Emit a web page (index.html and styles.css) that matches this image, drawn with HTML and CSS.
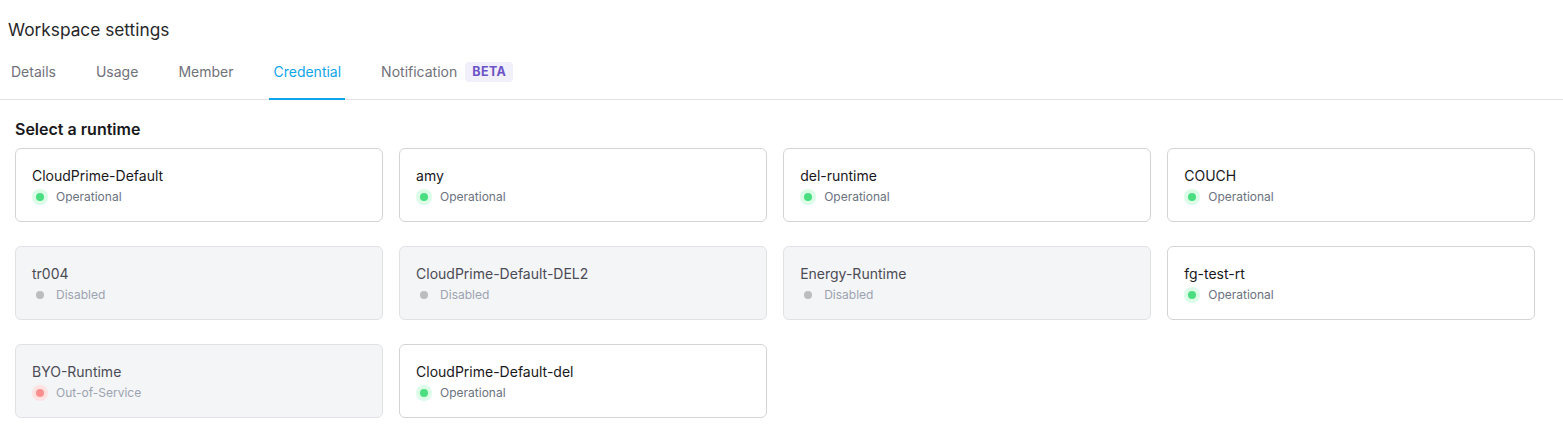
FILE: index.html
```html
<!DOCTYPE html>
<html lang="en">
<head>
<meta charset="utf-8">
<title>Workspace settings</title>
<link rel="stylesheet" href="styles.css">
</head>
<body>
  <header class="page-header">
    <h1 class="page-title">Workspace settings</h1>
    <nav class="tabs">
      <a class="tab">Details</a>
      <a class="tab">Usage</a>
      <a class="tab">Member</a>
      <a class="tab tab-active">Credential</a>
      <a class="tab">Notification <span class="badge">BETA</span></a>
    </nav>
  </header>

  <main class="content">
    <h2 class="section-title">Select a runtime</h2>
    <div class="runtime-grid">
      <div class="runtime-card">
        <div class="runtime-name">CloudPrime-Default</div>
        <div class="runtime-status"><span class="dot dot-ok"></span>Operational</div>
      </div>
      <div class="runtime-card">
        <div class="runtime-name">amy</div>
        <div class="runtime-status"><span class="dot dot-ok"></span>Operational</div>
      </div>
      <div class="runtime-card">
        <div class="runtime-name">del-runtime</div>
        <div class="runtime-status"><span class="dot dot-ok"></span>Operational</div>
      </div>
      <div class="runtime-card">
        <div class="runtime-name">COUCH</div>
        <div class="runtime-status"><span class="dot dot-ok"></span>Operational</div>
      </div>

      <div class="runtime-card is-inactive">
        <div class="runtime-name">tr004</div>
        <div class="runtime-status"><span class="dot dot-off"></span>Disabled</div>
      </div>
      <div class="runtime-card is-inactive">
        <div class="runtime-name">CloudPrime-Default-DEL2</div>
        <div class="runtime-status"><span class="dot dot-off"></span>Disabled</div>
      </div>
      <div class="runtime-card is-inactive">
        <div class="runtime-name">Energy-Runtime</div>
        <div class="runtime-status"><span class="dot dot-off"></span>Disabled</div>
      </div>
      <div class="runtime-card">
        <div class="runtime-name">fg-test-rt</div>
        <div class="runtime-status"><span class="dot dot-ok"></span>Operational</div>
      </div>

      <div class="runtime-card is-inactive">
        <div class="runtime-name">BYO-Runtime</div>
        <div class="runtime-status"><span class="dot dot-down"></span>Out-of-Service</div>
      </div>
      <div class="runtime-card">
        <div class="runtime-name">CloudPrime-Default-del</div>
        <div class="runtime-status"><span class="dot dot-ok"></span>Operational</div>
      </div>
    </div>
  </main>
</body>
</html>
```

FILE: styles.css
```css
* {
  box-sizing: border-box;
}

html, body {
  margin: 0;
  padding: 0;
  background: #ffffff;
}

body {
  font-family: Inter, "Noto Sans", "Liberation Sans", sans-serif;
  color: #18181b;
}

/* Header: title and tab strip */
.page-header {
  border-bottom: 1px solid #e4e4e7;
}

.page-title {
  margin: 0;
  padding: 18px 8px 0;
  font-size: 17.3px;
  line-height: 24px;
  font-weight: 400;
  color: #27272a;
}

.tabs {
  display: flex;
  align-items: flex-end;
  gap: 32px;
  padding: 8px 7px 0;
  margin-bottom: -1px;
}

.tab {
  display: flex;
  align-items: center;
  gap: 8px;
  padding: 12px 4px 16px;
  font-size: 14px;
  line-height: 20px;
  color: #71717a;
  border-bottom: 2px solid transparent;
  cursor: pointer;
}

.tab-active {
  color: #0ea5e9;
  border-bottom-color: #0ea5e9;
}

.badge {
  display: inline-block;
  padding: 0 7px;
  font-size: 12.5px;
  line-height: 20px;
  font-weight: 700;
  letter-spacing: 0.4px;
  color: #6b54c6;
  background: #f1f0fa;
  border-radius: 4px;
}

/* Runtime picker */
.content {
  padding: 19px 28px 0 15px;
}

.section-title {
  margin: 0 0 9px;
  font-size: 16px;
  line-height: 20px;
  font-weight: 600;
  color: #18181b;
}

.runtime-grid {
  display: grid;
  grid-template-columns: repeat(4, 1fr);
  column-gap: 16.3px;
  row-gap: 24px;
}

.runtime-card {
  height: 74px;
  padding: 17px 16px 15px;
  border: 1px solid #d4d4d8;
  border-radius: 6px;
  background: #ffffff;
}

.runtime-card.is-inactive {
  background: #f4f5f7;
  border-color: #e1e2e6;
}

.runtime-name {
  font-size: 14px;
  line-height: 20px;
  color: #18181b;
  margin-bottom: 3px;
}

.is-inactive .runtime-name {
  color: #4b4b55;
}

.runtime-status {
  display: flex;
  align-items: center;
  gap: 8px;
  font-size: 12px;
  line-height: 16px;
  color: #6b7280;
}

.is-inactive .runtime-status {
  color: #9ca3af;
}

.dot {
  position: relative;
  width: 16px;
  height: 16px;
  border-radius: 50%;
  flex: none;
}

.dot::after {
  content: "";
  position: absolute;
  left: 4px;
  top: 4px;
  width: 8px;
  height: 8px;
  border-radius: 50%;
}

.dot-ok {
  background: #dcfce7;
}

.dot-ok::after {
  background: #4ade80;
}

.dot-off {
  background: transparent;
}

.dot-off::after {
  background: #bdbdbd;
}

.dot-down {
  background: #fee2e2;
}

.dot-down::after {
  background: #fb8f8f;
}
```
